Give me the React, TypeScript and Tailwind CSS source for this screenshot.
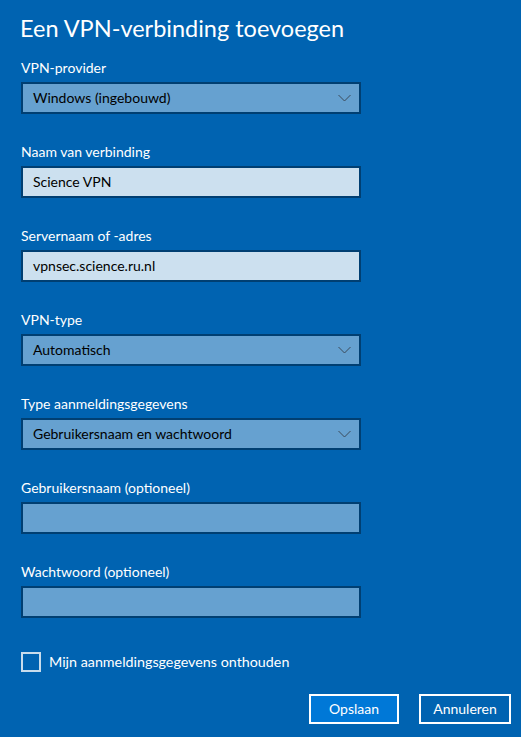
import React from "react";

const font = { fontFamily: 'Lato, "Noto Sans", sans-serif' };

function Chevron() {
  return (
    <svg width="13" height="8" viewBox="0 0 13 8" className="shrink-0">
      <path d="M0.5 1 L6.5 7 L12.5 1" fill="none" stroke="#3a4a5a" strokeWidth="1" />
    </svg>
  );
}

function Field({ label, value, kind }: { label: string; value?: string; kind: "select" | "text" | "empty" }) {
  const bg = kind === "text" ? "bg-[#cce0ef]" : "bg-[#66a1d0]";
  return (
    <div className="flex flex-col">
      <div className="h-[20px] leading-[20px] text-[14px] text-white mb-[4px]">{label}</div>
      <div className={`w-[340px] h-[32px] border-2 border-[#003f72] ${bg} flex items-center justify-between pl-[10px] pr-[8px]`}>
        <span className="text-[14px] text-black leading-[20px]">{value}</span>
        {kind === "select" && <Chevron />}
      </div>
    </div>
  );
}

export default function App() {
  return (
    <div style={font} className="w-[521px] h-[737px] bg-[#0063b1] overflow-hidden flex flex-col pl-[21px] pr-[10px]">
      <h1 className="mt-[12px] h-[32px] leading-[32px] text-[23.5px] text-white -ml-[1px] font-normal">
        Een VPN-verbinding toevoegen
      </h1>
      <div className="mt-[14px] flex flex-col gap-[28px]">
        <Field label="VPN-provider" value="Windows (ingebouwd)" kind="select" />
        <Field label="Naam van verbinding" value="Science VPN" kind="text" />
        <Field label="Servernaam of -adres" value="vpnsec.science.ru.nl" kind="text" />
        <Field label="VPN-type" value="Automatisch" kind="select" />
        <Field label="Type aanmeldingsgegevens" value="Gebruikersnaam en wachtwoord" kind="select" />
        <Field label="Gebruikersnaam (optioneel)" kind="empty" />
        <Field label="Wachtwoord (optioneel)" kind="empty" />
      </div>
      <label className="mt-[34px] flex items-center gap-[8px] h-[20px]">
        <span className="w-[20px] h-[20px] border-2 border-[#c8dcec] shrink-0" />
        <span className="text-[14.3px] text-white leading-[20px]">Mijn aanmeldingsgegevens onthouden</span>
      </label>
      <div className="mt-[22px] flex justify-end gap-[20px]">
        <button className="w-[90px] h-[30px] border-2 border-white bg-[#0078d7] text-white text-[14px] leading-[20px]">
          Opslaan
        </button>
        <button className="w-[92px] h-[30px] border-2 border-white bg-[#0063b1] text-white text-[14px] leading-[20px]">
          Annuleren
        </button>
      </div>
    </div>
  );
}
